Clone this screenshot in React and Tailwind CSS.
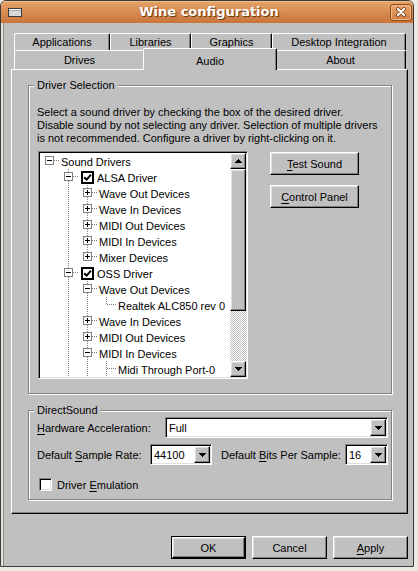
import React from 'react';

const RAISED =
  "border border-t-white border-l-white border-r-black border-b-black shadow-[inset_-1px_-1px_0_#808080,inset_1px_1px_0_#dfdfdf]";
const SUNKEN =
  "border border-t-[#808080] border-l-[#808080] border-r-white border-b-white shadow-[inset_1px_1px_0_#000,inset_-1px_-1px_0_#dfdfdf]";

function Arrow({ dir = 'down' }) {
  return (
    <svg width="7" height="4" viewBox="0 0 7 4" shapeRendering="crispEdges">
      {dir === 'down' ? (
        <path d="M0 0h7v1h-1v1h-1v1h-1v1h-1v-1h-1v-1h-1v-1h-1z" fill="#000" />
      ) : (
        <path d="M3 0h1v1h1v1h1v1h1v1h-7v-1h1v-1h1v-1h1z" fill="#000" />
      )}
    </svg>
  );
}

function U({ children }) {
  return <span className="underline decoration-1 underline-offset-[2px]">{children}</span>;
}

function Tab({ w, children }) {
  return (
    <div
      className={`${w} h-full flex items-center justify-center pt-[1px] border-t border-l border-r border-t-white border-l-white border-r-black shadow-[inset_-1px_0_0_#808080] rounded-tl-[2px] rounded-tr-[2px] bg-[#c0c0c0]`}
    >
      {children}
    </div>
  );
}

const rows = [
  { t: 'Sound Drivers', l: 0, box: '-', cont: [], next: false, root: true },
  { t: 'ALSA Driver', l: 1, box: '-', cb: true, cont: [false], next: true },
  { t: 'Wave Out Devices', l: 2, box: '+', cont: [false, true], next: true },
  { t: 'Wave In Devices', l: 2, box: '+', cont: [false, true], next: true },
  { t: 'MIDI Out Devices', l: 2, box: '+', cont: [false, true], next: true },
  { t: 'MIDI In Devices', l: 2, box: '+', cont: [false, true], next: true },
  { t: 'Mixer Devices', l: 2, box: '+', cont: [false, true], next: false },
  { t: 'OSS Driver', l: 1, box: '-', cb: true, cont: [false], next: true },
  { t: 'Wave Out Devices', l: 2, box: '-', cont: [false, true], next: true },
  { t: 'Realtek ALC850 rev 0', l: 3, cont: [false, true, true], next: false },
  { t: 'Wave In Devices', l: 2, box: '+', cont: [false, true], next: true },
  { t: 'MIDI Out Devices', l: 2, box: '+', cont: [false, true], next: true },
  { t: 'MIDI In Devices', l: 2, box: '-', cont: [false, true], next: true },
  { t: 'Midi Through Port-0', l: 3, cont: [false, true, true], next: true },
];

function Gutter({ r }) {
  const W = (r.l + 1) * 19;
  const cx = r.l * 19 + 9.5;
  const base = r.l * 19;
  const dot = { stroke: '#808080', strokeWidth: 1, strokeDasharray: '1 1' };
  return (
    <svg width={W} height="16" viewBox={`0 0 ${W} 16`} shapeRendering="crispEdges" className="shrink-0">
      {r.cont.map((c, k) =>
        c ? <line key={k} x1={k * 19 + 9.5} y1={0} x2={k * 19 + 9.5} y2={16} {...dot} /> : null
      )}
      {!r.root && <line x1={cx} y1={0} x2={cx} y2={8} {...dot} />}
      {r.next && <line x1={cx} y1={8} x2={cx} y2={16} {...dot} />}
      <line x1={base + 10} y1={7.5} x2={base + 19} y2={7.5} {...dot} />
      {r.box && (
        <g>
          <rect x={base + 5.5} y={3.5} width={8} height={8} fill="#fff" stroke="#808080" />
          <line x1={base + 7} y1={7.5} x2={base + 12} y2={7.5} stroke="#000" />
          {r.box === '+' && <line x1={base + 9.5} y1={5} x2={base + 9.5} y2={10} stroke="#000" />}
        </g>
      )}
    </svg>
  );
}

function TreeCheck() {
  return (
    <div className="w-[13px] h-[13px] border-2 border-black bg-white flex items-center justify-center ml-[3px] shrink-0">
      <svg width="9" height="9" viewBox="0 0 9 9">
        <path d="M1.2 4.2 L3.6 6.6 L8 1.6" fill="none" stroke="#000" strokeWidth="2" />
      </svg>
    </div>
  );
}

function Tree() {
  return (
    <div className={`w-[210px] h-[228px] p-[1px] bg-white ${SUNKEN} flex`}>
      <div className="flex-1 flex flex-col overflow-hidden">
        {rows.map((r, i) => (
          <div key={i} className="h-[16px] flex items-center whitespace-nowrap">
            <Gutter r={r} />
            {r.cb && <TreeCheck />}
            <span className={`h-[16px] pt-[2px] leading-[14px] ${r.cb ? 'ml-[3px]' : 'ml-[2px]'}`}>{r.t}</span>
          </div>
        ))}
      </div>
      <div className="w-[16px] flex flex-col">
        <div className={`h-[16px] flex items-center justify-center bg-[#c0c0c0] ${RAISED}`}>
          <Arrow dir="up" />
        </div>
        <div className={`h-[142px] bg-[#c0c0c0] ${RAISED}`} />
        <div className="flex-1 bg-[repeating-conic-gradient(#c0c0c0_0_25%,#ffffff_0_50%)] bg-[length:2px_2px]" />
        <div className={`h-[16px] flex items-center justify-center bg-[#c0c0c0] ${RAISED}`}>
          <Arrow />
        </div>
      </div>
    </div>
  );
}

function Combo({ w, value }) {
  return (
    <div className={`${w} h-[21px] p-[1px] bg-white ${SUNKEN} flex`}>
      <div className="flex-1 pl-[2px] pt-[1px] flex items-center">{value}</div>
      <div className={`w-[16px] h-full flex items-center justify-center bg-[#c0c0c0] ${RAISED}`}>
        <Arrow />
      </div>
    </div>
  );
}

function Button({ w, children, def }) {
  const inner = (
    <div className={`w-full h-full flex items-center justify-center pt-[1px] bg-[#c0c0c0] ${RAISED}`}>{children}</div>
  );
  return def ? (
    <div className={`${w} h-[23px] border border-black`}>{inner}</div>
  ) : (
    <div className={`${w} h-[23px]`}>{inner}</div>
  );
}

function Fieldset({ title, className, children }) {
  return (
    <fieldset
      className={`w-[364px] border border-[#808080] shadow-[1px_1px_0_#fff,inset_1px_1px_0_#fff] pl-[8px] pr-[2px] ${className}`}
    >
      <legend className="-ml-[3px] px-[3px] leading-[13px] bg-[#c0c0c0]">{title}</legend>
      {children}
    </fieldset>
  );
}

function TitleBar() {
  return (
    <div className="h-[22px] flex items-center bg-linear-to-b from-[#e5a468] to-[#c9743a] shadow-[inset_0_1px_0_#f0bd8c]">
      <div className="pl-[7px] shrink-0">
        <svg width="14" height="9" viewBox="0 0 14 9" shapeRendering="crispEdges">
          <rect x="0.5" y="0.5" width="13" height="8" fill="#d8d8d8" stroke="#3a3a3a" />
          <line x1="1" y1="1.5" x2="13" y2="1.5" stroke="#ffffff" />
          <line x1="1" y1="2.5" x2="13" y2="2.5" stroke="#9aa6b8" />
        </svg>
      </div>
      <div className="flex-1 text-center pl-[6px] font-['DejaVu_Sans',sans-serif] font-bold text-[13px] leading-[22px] text-white [text-shadow:1px_1px_1px_rgba(70,35,5,0.85)]">
        Wine configuration
      </div>
      <div className="mr-[1px] w-[22px] h-[17px] rounded-[3px] border border-[#8e4a17] bg-linear-to-b from-[#e9a66d] to-[#d07d43] shadow-[inset_0_0_0_1px_#efb987] flex items-center justify-center shrink-0">
        <svg width="10" height="10" viewBox="0 0 10 10">
          <path d="M2 2 L8 8 M8 2 L2 8" stroke="#6b3610" strokeWidth="3.6" strokeLinecap="round" />
          <path d="M2 2 L8 8 M8 2 L2 8" stroke="#ffffff" strokeWidth="2.2" strokeLinecap="round" />
        </svg>
      </div>
    </div>
  );
}

export default function App() {
  return (
    <div className="w-[418px] h-[571px] bg-[#edeae6] font-['Liberation_Sans',Arial,sans-serif] text-[11px] text-black">
      <div className="w-[414px] h-[567px] flex flex-col rounded-t-[6px] border border-[#3c3a36] overflow-hidden">
        <TitleBar />
        <div className="flex-1 bg-[#c0c0c0] pl-[10px] pr-[5px] pt-[10px] flex flex-col shadow-[inset_2px_0_0_#e4e1dc,inset_3px_0_0_#8c8984]">
          {/* Tabs */}
          <div className="ml-[3px] w-[392px] flex flex-col">
            <div className="h-[17px] flex">
              <Tab w="w-[96px]">Applications</Tab>
              <Tab w="w-[81px]">Libraries</Tab>
              <Tab w="w-[81px]">Graphics</Tab>
              <Tab w="w-[134px]">Desktop Integration</Tab>
            </div>
            <div className="h-[19px] flex">
              <Tab w="w-[131px]">Drives</Tab>
              <div className="relative z-10 w-[134px] h-[22px] -mx-[2px] -mt-[2px] -mb-[1px] flex justify-center pt-[4px] border-t border-l border-r border-t-white border-l-white border-r-black shadow-[inset_-1px_0_0_#808080] rounded-tl-[2px] rounded-tr-[2px] bg-[#c0c0c0]">
                Audio
              </div>
              <Tab w="w-[131px]">About</Tab>
            </div>
          </div>
          {/* Panel */}
          <div className="w-[397px] h-[445px] border border-t-white border-l-white border-r-black border-b-black shadow-[inset_-1px_-1px_0_#808080] pl-[16px] pt-[9px]">
            <Fieldset title="Driver Selection" className="pt-[14px] pb-[14px]">
              <div className="leading-[13px] whitespace-nowrap">
                <div>Select a sound driver by checking the box of the desired driver.</div>
                <div>Disable sound by not selecting any driver. Selection of multiple drivers</div>
                <div>is not recommended. Configure a driver by right-clicking on it.</div>
              </div>
              <div className="mt-[6px] flex">
                <div className="ml-[1px]">
                  <Tree />
                </div>
                <div className="ml-[22px] mt-[1px] flex flex-col gap-[10px]">
                  <Button w="w-[89px]">
                    <span>
                      <U>T</U>est Sound
                    </span>
                  </Button>
                  <Button w="w-[89px]">
                    <span>
                      <U>C</U>ontrol Panel
                    </span>
                  </Button>
                </div>
              </div>
            </Fieldset>
            <Fieldset title="DirectSound" className="mt-[10px] pb-[8px]">
              <div className="h-[21px] flex items-center">
                <div className="w-[128px] pt-[1px]">
                  <U>H</U>ardware Acceleration:
                </div>
                <Combo w="w-[223px]" value="Full" />
              </div>
              <div className="mt-[6px] h-[21px] flex items-center">
                <div className="w-[113px] pt-[1px]">
                  Default <U>S</U>ample Rate:
                </div>
                <Combo w="w-[62px]" value="44100" />
                <div className="ml-[9px] pt-[1px] whitespace-nowrap">
                  Default <U>B</U>its Per Sample:
                </div>
                <div className="ml-auto mr-[1px]">
                  <Combo w="w-[43px]" value="16" />
                </div>
              </div>
              <div className="mt-[13px] h-[13px] flex items-center">
                <div className={`ml-[2px] w-[13px] h-[13px] bg-white ${SUNKEN}`} />
                <div className="ml-[5px] pt-[1px]">
                  Driver <U>E</U>mulation
                </div>
              </div>
            </Fieldset>
          </div>
          {/* Bottom buttons */}
          <div className="mt-[22px] w-[397px] flex justify-end gap-[6px]">
            <Button w="w-[75px]" def>
              OK
            </Button>
            <Button w="w-[75px]">Cancel</Button>
            <Button w="w-[75px]">
              <span>
                <U>A</U>pply
              </span>
            </Button>
          </div>
        </div>
      </div>
    </div>
  );
}
